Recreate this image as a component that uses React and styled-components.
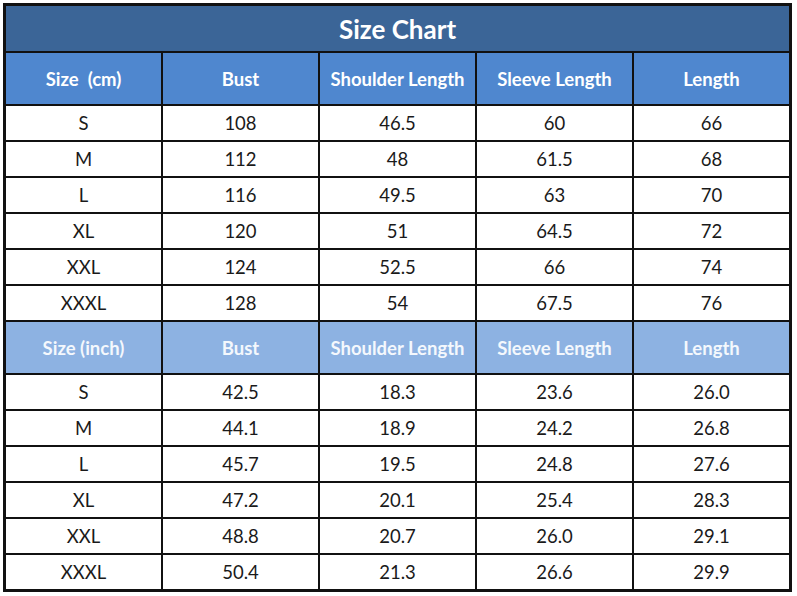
import React from "react";
import styled, { createGlobalStyle } from "styled-components";

const GlobalStyle = createGlobalStyle`
  html, body {
    margin: 0;
    padding: 0;
    background: #ffffff;
  }
  body {
    font-family: Lato, "Open Sans", sans-serif;
  }
`;

const headers = ["Bust", "Shoulder Length", "Sleeve Length", "Length"];

const cmRows = [
  ["S", "108", "46.5", "60", "66"],
  ["M", "112", "48", "61.5", "68"],
  ["L", "116", "49.5", "63", "70"],
  ["XL", "120", "51", "64.5", "72"],
  ["XXL", "124", "52.5", "66", "74"],
  ["XXXL", "128", "54", "67.5", "76"],
];

const inchRows = [
  ["S", "42.5", "18.3", "23.6", "26.0"],
  ["M", "44.1", "18.9", "24.2", "26.8"],
  ["L", "45.7", "19.5", "24.8", "27.6"],
  ["XL", "47.2", "20.1", "25.4", "28.3"],
  ["XXL", "48.8", "20.7", "26.0", "29.1"],
  ["XXXL", "50.4", "21.3", "26.6", "29.9"],
];

// one block = header row + its data rows
const Section = ({ label, tone, rows }) => (
  <>
    <HeadCell tone={tone}>{label}</HeadCell>
    {headers.map((h) => (
      <HeadCell key={h} tone={tone}>
        {h}
      </HeadCell>
    ))}
    {rows.map((row) =>
      row.map((v, i) => <Cell key={row[0] + i}>{v}</Cell>)
    )}
  </>
);

const App = () => {
  return (
    <>
      <GlobalStyle />
      <Page>
        <Chart>
          <Title>Size Chart</Title>
          <Section label={"Size\u00a0 (cm)"} tone="dark" rows={cmRows} />
          <Section label="Size (inch)" tone="light" rows={inchRows} />
        </Chart>
      </Page>
    </>
  );
};

const Page = styled.div`
  padding: 3px 0 0 3px;
`;

const Chart = styled.div`
  box-sizing: border-box;
  width: 789px;
  display: grid;
  grid-template-columns: repeat(5, 1fr);
  grid-template-rows: 45px 51px repeat(6, 34px) 51px repeat(6, 34px);
  gap: 2px;
  background: #111111;
  border: 3px solid #111111;
`;

const Title = styled.div`
  grid-column: 1 / -1;
  display: flex;
  align-items: center;
  justify-content: center;
  background: #3b6597;
  color: #ffffff;
  font-size: 26px;
  font-weight: 700;
`;

const HeadCell = styled.div`
  display: flex;
  align-items: center;
  justify-content: center;
  background: ${(p) => (p.tone === "dark" ? "#4f87cf" : "#8db2e2")};
  color: ${(p) => (p.tone === "dark" ? "#ffffff" : "#f4f8fd")};
  font-size: 18.5px;
  font-weight: 700;
  white-space: nowrap;
`;

const Cell = styled.div`
  display: flex;
  align-items: center;
  justify-content: center;
  background: #ffffff;
  color: #1a1a1a;
  font-size: 18.5px;
`;

export default App;
